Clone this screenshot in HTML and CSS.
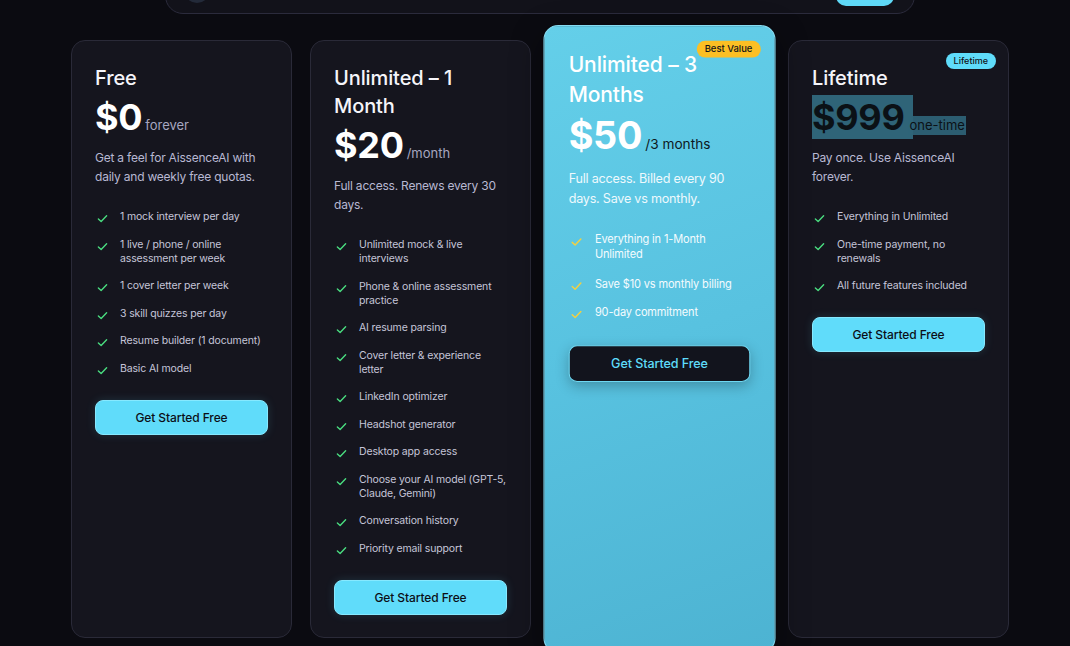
FILE: index.html
```html
<!DOCTYPE html>
<html lang="en">
<head>
<meta charset="utf-8">
<title>Pricing</title>
<link rel="stylesheet" href="styles.css">
</head>
<body>
<header class="topbar">
  <span class="avatar"></span>
  <span class="top-btn"></span>
</header>
<main class="plans">
  <section class="card">
    <h2 class="title">Free</h2>
    <div class="price"><span class="amount">$0</span><span class="period">forever</span></div>
    <p class="desc">Get a feel for AissenceAI with daily and weekly free quotas.</p>
    <ul class="features">
      <li><svg class="check" viewBox="0 0 12 12"><polyline points="1.5,6.5 4.5,9.3 10.5,3"/></svg><span>1 mock interview per day</span></li>
      <li><svg class="check" viewBox="0 0 12 12"><polyline points="1.5,6.5 4.5,9.3 10.5,3"/></svg><span>1 live / phone / online assessment per week</span></li>
      <li><svg class="check" viewBox="0 0 12 12"><polyline points="1.5,6.5 4.5,9.3 10.5,3"/></svg><span>1 cover letter per week</span></li>
      <li><svg class="check" viewBox="0 0 12 12"><polyline points="1.5,6.5 4.5,9.3 10.5,3"/></svg><span>3 skill quizzes per day</span></li>
      <li><svg class="check" viewBox="0 0 12 12"><polyline points="1.5,6.5 4.5,9.3 10.5,3"/></svg><span>Resume builder (1 document)</span></li>
      <li><svg class="check" viewBox="0 0 12 12"><polyline points="1.5,6.5 4.5,9.3 10.5,3"/></svg><span>Basic AI model</span></li>
    </ul>
    <button class="cta">Get Started Free</button>
  </section>

  <section class="card">
    <h2 class="title">Unlimited – 1 Month</h2>
    <div class="price"><span class="amount">$20</span><span class="period">/month</span></div>
    <p class="desc">Full access. Renews every 30 days.</p>
    <ul class="features">
      <li><svg class="check" viewBox="0 0 12 12"><polyline points="1.5,6.5 4.5,9.3 10.5,3"/></svg><span>Unlimited mock &amp; live interviews</span></li>
      <li><svg class="check" viewBox="0 0 12 12"><polyline points="1.5,6.5 4.5,9.3 10.5,3"/></svg><span>Phone &amp; online assessment practice</span></li>
      <li><svg class="check" viewBox="0 0 12 12"><polyline points="1.5,6.5 4.5,9.3 10.5,3"/></svg><span>AI resume parsing</span></li>
      <li><svg class="check" viewBox="0 0 12 12"><polyline points="1.5,6.5 4.5,9.3 10.5,3"/></svg><span>Cover letter &amp; experience letter</span></li>
      <li><svg class="check" viewBox="0 0 12 12"><polyline points="1.5,6.5 4.5,9.3 10.5,3"/></svg><span>LinkedIn optimizer</span></li>
      <li><svg class="check" viewBox="0 0 12 12"><polyline points="1.5,6.5 4.5,9.3 10.5,3"/></svg><span>Headshot generator</span></li>
      <li><svg class="check" viewBox="0 0 12 12"><polyline points="1.5,6.5 4.5,9.3 10.5,3"/></svg><span>Desktop app access</span></li>
      <li><svg class="check" viewBox="0 0 12 12"><polyline points="1.5,6.5 4.5,9.3 10.5,3"/></svg><span>Choose your AI model (GPT-5, Claude, Gemini)</span></li>
      <li><svg class="check" viewBox="0 0 12 12"><polyline points="1.5,6.5 4.5,9.3 10.5,3"/></svg><span>Conversation history</span></li>
      <li><svg class="check" viewBox="0 0 12 12"><polyline points="1.5,6.5 4.5,9.3 10.5,3"/></svg><span>Priority email support</span></li>
    </ul>
    <button class="cta">Get Started Free</button>
  </section>

  <section class="card featured">
    <span class="badge badge-best">Best Value</span>
    <h2 class="title">Unlimited – 3 Months</h2>
    <div class="price"><span class="amount">$50</span><span class="period">/3 months</span></div>
    <p class="desc">Full access. Billed every 90 days. Save vs monthly.</p>
    <ul class="features">
      <li><svg class="check" viewBox="0 0 12 12"><polyline points="1.5,6.5 4.5,9.3 10.5,3"/></svg><span>Everything in 1-Month Unlimited</span></li>
      <li><svg class="check" viewBox="0 0 12 12"><polyline points="1.5,6.5 4.5,9.3 10.5,3"/></svg><span>Save $10 vs monthly billing</span></li>
      <li><svg class="check" viewBox="0 0 12 12"><polyline points="1.5,6.5 4.5,9.3 10.5,3"/></svg><span>90-day commitment</span></li>
    </ul>
    <button class="cta">Get Started Free</button>
  </section>

  <section class="card">
    <span class="badge badge-life">Lifetime</span>
    <h2 class="title">Lifetime</h2>
    <div class="price selected"><span class="amount">$999</span><span class="period">one-time</span></div>
    <p class="desc">Pay once. Use AissenceAI forever.</p>
    <ul class="features">
      <li><svg class="check" viewBox="0 0 12 12"><polyline points="1.5,6.5 4.5,9.3 10.5,3"/></svg><span>Everything in Unlimited</span></li>
      <li><svg class="check" viewBox="0 0 12 12"><polyline points="1.5,6.5 4.5,9.3 10.5,3"/></svg><span>One-time payment, no renewals</span></li>
      <li><svg class="check" viewBox="0 0 12 12"><polyline points="1.5,6.5 4.5,9.3 10.5,3"/></svg><span>All future features included</span></li>
    </ul>
    <button class="cta">Get Started Free</button>
  </section>
</main>
</body>
</html>
```
FILE: styles.css
```css
* { box-sizing: border-box; }

html {
  overflow: hidden;
  background: #0b0b11;
}

body {
  margin: 0;
  padding: 0 0 40px;
  background: #0b0b11;
  font-family: Inter, "Noto Sans", "Liberation Sans", sans-serif;
  color: #f3f3f8;
}

.topbar {
  display: flex;
  align-items: center;
  justify-content: space-between;
  width: 750px;
  height: 48px;
  margin: -34px 0 0 165px;
  padding: 0 20px 0 18px;
  background: #12121a;
  border: 1px solid #2b2b3c;
  border-radius: 18px;
}

.avatar {
  width: 26px;
  height: 26px;
  border-radius: 50%;
  background: #232a39;
}

.top-btn {
  width: 58px;
  height: 32px;
  border-radius: 10px;
  background: #5fd9f7;
}

.plans {
  display: grid;
  grid-template-columns: repeat(4, 221px);
  column-gap: 18px;
  margin: 26px 0 0 71px;
  align-items: stretch;
}

.card {
  position: relative;
  display: flex;
  flex-direction: column;
  padding: 23px 23px 22px;
  background: #15151e;
  border: 1px solid #2a2a38;
  border-radius: 14px;
}

.title {
  margin: 0;
  font-size: 20px;
  line-height: 28px;
  font-weight: 500;
  color: #f5f5fa;
  letter-spacing: -0.1px;
}

.price {
  display: flex;
  align-items: baseline;
  gap: 3px;
  margin: 3px 0 0;
  height: 44px;
}

.amount {
  font-size: 36px;
  line-height: 44px;
  font-weight: 700;
  color: #ffffff;
  letter-spacing: -0.3px;
}

.period {
  font-size: 13px;
  line-height: 19px;
  color: #a7a7c0;
}

.desc {
  margin: 9px 0 0;
  font-size: 12px;
  line-height: 19px;
  letter-spacing: -0.22px;
  color: #b8b8d2;
}

.features {
  list-style: none;
  margin: 24px 0 0;
  padding: 0;
  display: flex;
  flex-direction: column;
  gap: 13.5px;
}

.features li {
  display: flex;
  align-items: flex-start;
  gap: 12px;
  font-size: 10.5px;
  line-height: 14px;
  letter-spacing: -0.15px;
  color: #c5c5d9;
}

.check {
  flex: none;
  width: 11px;
  height: 11px;
  margin: 3px 0 0 2px;
  fill: none;
  stroke: #4ade80;
  stroke-width: 1.5;
  stroke-linecap: round;
  stroke-linejoin: round;
}

.cta {
  margin-top: 24px;
  width: 100%;
  height: 35px;
  border: 1px solid #86e9ff;
  border-radius: 8px;
  background: #60dcfa;
  color: #0c0e16;
  font-family: inherit;
  font-size: 12px;
  letter-spacing: -0.1px;
  font-weight: 500;
  box-shadow: 0 0 10px rgba(96, 220, 250, 0.15);
}

.badge {
  position: absolute;
  top: 12px;
  right: 12px;
  height: 16px;
  padding: 0 8px;
  border-radius: 8px;
  font-size: 9px;
  line-height: 16px;
  font-weight: 500;
  color: #111318;
}

.badge-best { background: #fbbf24; top: 14px; right: 13px; }
.badge-life { background: #5fdcfa; }

.featured {
  transform: scale(1.05);
  background: linear-gradient(160deg, #64cfe9 0%, #58c2e0 50%, #4db3d2 100%);
  border: 1px solid #86dcf2;
  box-shadow: 0 0 0 1px rgba(10, 10, 16, 0.6), 0 10px 30px rgba(0, 0, 0, 0.4);
  z-index: 1;
}

.featured .title,
.featured .amount { color: #ffffff; }

.featured .period { color: #0d1822; }

.featured .desc { color: #eef9fd; }

.featured .features li { color: #f4fbfe; }

.featured .check { stroke: #f4d03f; }

.featured .cta {
  background: #12141d;
  color: #5fdcfa;
  border: 1px solid #6fd8f2;
  box-shadow: 0 4px 12px rgba(0, 0, 0, 0.25);
}

.selected .amount {
  color: #0b1116;
  background: #2f6478;
  padding-right: 8px;
  margin-right: -8px;
}

.selected .period {
  position: relative;
  color: #0b1116;
  background: rgba(47, 100, 120, 0.92);
  padding: 0 1px 0 2px;
}
```
